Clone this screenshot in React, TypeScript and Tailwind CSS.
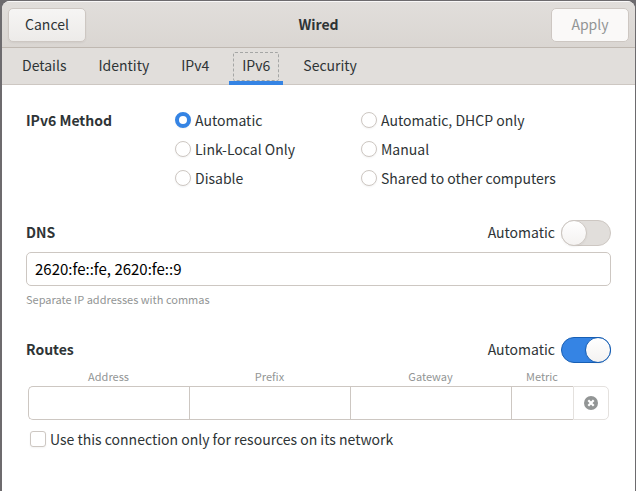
import { useState } from "react";

const tabs = ["Details", "Identity", "IPv4", "IPv6", "Security"];

const methods = [
  "Automatic",
  "Automatic, DHCP only",
  "Link-Local Only",
  "Manual",
  "Disable",
  "Shared to other computers",
];

function Switch({ id, defaultChecked }: { id: string; defaultChecked: boolean }) {
  return (
    <span className="relative block h-[26px] w-[50px]">
      <input
        id={id}
        type="checkbox"
        role="switch"
        defaultChecked={defaultChecked}
        className="peer block h-full w-full appearance-none rounded-full border border-[#cdc7c2] bg-[#e1dedb] checked:border-[#185fb4] checked:bg-[#3584e4]"
      />
      <span className="pointer-events-none absolute left-0 top-0 size-[26px] rounded-full border border-[#cdc7c2] bg-linear-to-b from-white to-[#f4f2f1] shadow-xs peer-checked:left-6 peer-checked:border-[#185fb4]" />
    </span>
  );
}

function SectionHead({ title, id, on }: { title: string; id: string; on: boolean }) {
  return (
    <div className="flex items-center justify-between">
      <h2 className="pb-0.5 font-bold">{title}</h2>
      <div className="flex items-center gap-1.5">
        <label htmlFor={id} className="pb-0.5">
          Automatic
        </label>
        <Switch id={id} defaultChecked={on} />
      </div>
    </div>
  );
}

export default function App() {
  const [tab, setTab] = useState("IPv6");
  return (
    <div className="flex min-h-screen flex-col bg-[#6d6b6e] pl-0.5 pr-px pt-px font-['Noto_Sans_CJK_SC',sans-serif] text-[14px] leading-5 text-[#2e3436]">
      <div className="flex grow flex-col overflow-hidden rounded-t-lg bg-white">
        <header className="grid h-[47px] grid-cols-[1fr_auto_1fr] items-center border-b border-[#bfb8b1] border-t border-t-[#f9f8f8] bg-linear-to-b from-[#e1dedb] to-[#dad6d2] px-1.5">
          <button className="h-[34px] w-[78px] justify-self-start rounded-[5px] border border-[#cdc7c2] bg-linear-to-b from-[#f6f5f4] to-[#edebe9] pb-0.5 shadow-xs">
            Cancel
          </button>
          <h1 className="pb-0.5 font-bold">Wired</h1>
          <button
            disabled
            className="h-[34px] w-[78px] justify-self-end rounded-[5px] border border-[#cdc7c2] bg-[#faf9f8] pb-0.5 text-[#929595]"
          >
            Apply
          </button>
        </header>

        <nav role="tablist" className="flex h-[37px] gap-2 border-b border-[#cdc7c2] bg-[#e1dedb] px-2">
          {tabs.map((name) => (
            <button
              key={name}
              role="tab"
              aria-selected={name === tab}
              onClick={() => setTab(name)}
              className={
                name === tab
                  ? "-mb-px border-b-4 border-[#3584e4] px-1 pt-1"
                  : "px-3 pb-0.5"
              }
            >
              {name === tab ? (
                <span className="block rounded-xs border border-dashed border-[#a5a6a5] px-2 pb-[5px] pt-0.5">
                  {name}
                </span>
              ) : (
                name
              )}
            </button>
          ))}
        </nav>

        <main className="px-6 pt-5">
          <fieldset className="flex">
            <legend className="float-left w-[149px] py-[5px] font-bold">IPv6 Method</legend>
            <div className="grid grid-cols-[186px_auto]">
              {methods.map((name, i) => (
                <label key={name} className="flex h-[29px] items-center gap-1">
                  <input
                    type="radio"
                    name="method"
                    defaultChecked={i === 0}
                    className="size-4 appearance-none rounded-full border border-[#cdc7c2] bg-white shadow-xs checked:border-4 checked:border-[#3584e4]"
                  />
                  {name}
                </label>
              ))}
            </div>
          </fieldset>

          <section className="mt-7">
            <SectionHead title="DNS" id="dns-auto" on={false} />
            <input
              aria-label="DNS"
              defaultValue="2620:fe::fe, 2620:fe::9"
              className="mt-1.5 block h-[34px] w-full rounded-[5px] border border-[#cdc7c2] bg-white px-2 pb-0.5 text-[15px] text-black"
            />
            <p className="mt-[5px] text-[11px] leading-4 text-[#929595]">
              Separate IP addresses with commas
            </p>
          </section>

          <section className="mt-[30px]">
            <SectionHead title="Routes" id="routes-auto" on={true} />
            <div className="mx-0.5">
              <div className="mt-[5px] grid grid-cols-[1fr_1fr_1fr_62px_36px] pb-0.5 text-center text-[11px] leading-4 text-[#929595]">
                <label htmlFor="address">Address</label>
                <label htmlFor="prefix">Prefix</label>
                <label htmlFor="gateway">Gateway</label>
                <label htmlFor="metric">Metric</label>
              </div>
              <div className="grid h-[34px] grid-cols-[1fr_1fr_1fr_62px_36px]">
                <input id="address" className="min-w-0 rounded-l-[5px] border border-r-0 border-[#cdc7c2] px-2" />
                <input id="prefix" className="min-w-0 border border-r-0 border-[#cdc7c2] px-2" />
                <input id="gateway" className="min-w-0 border border-r-0 border-[#cdc7c2] px-2" />
                <input id="metric" className="min-w-0 border border-r-0 border-[#cdc7c2] px-2" />
                <button
                  aria-label="Delete route"
                  className="flex items-center justify-center rounded-r-[5px] border border-[#e4e1de]"
                >
                  <svg viewBox="0 0 14 14" className="size-3.5">
                    <circle cx="7" cy="7" r="7" fill="#929595" />
                    <path d="M4.3 4.3l5.4 5.4M9.7 4.3L4.3 9.7" stroke="#fff" strokeWidth="2.2" />
                  </svg>
                </button>
              </div>
              <label className="ml-0.5 mt-[9px] flex items-center gap-1">
                <input
                  type="checkbox"
                  className="size-4 appearance-none rounded-[3px] border border-[#cdc7c2] bg-white shadow-xs checked:bg-[#3584e4]"
                />
                Use this connection only for resources on its network
              </label>
            </div>
          </section>
        </main>
      </div>
    </div>
  );
}
